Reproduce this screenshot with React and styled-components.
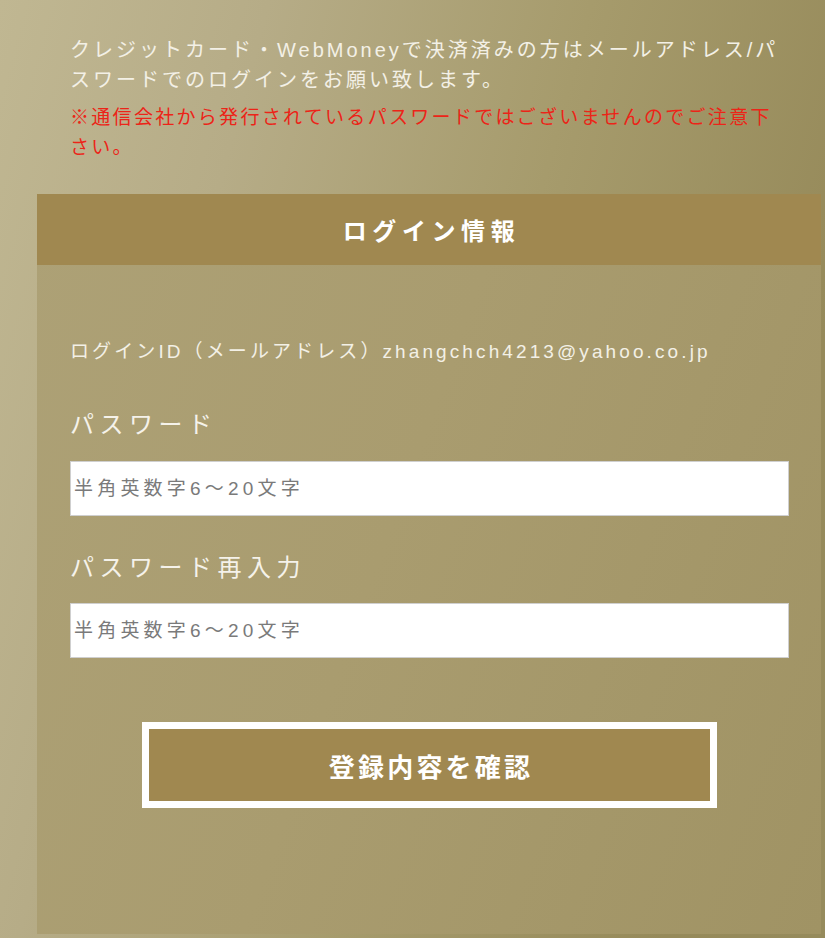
import React from 'react';
import styled, { createGlobalStyle } from 'styled-components';

const GlobalStyle = createGlobalStyle`
	html,
	body {
		margin: 0;
		padding: 0;
	}

	body {
		min-height: 100vh;
		font-family: 'Liberation Sans', 'Noto Sans CJK JP', sans-serif;
		background: linear-gradient(105deg, #c0b792 0%, #b6ac87 25%, #a69b6c 55%, #968a5a 85%, #968b5c 100%);
		background-attachment: fixed;
	}
`;

const Page = styled.div`
	padding: 35px 4px 4px 37px;
	box-sizing: border-box;
`;

const Intro = styled.div`
	width: 718px;
	margin-left: 33px;

	p {
		margin: 0;
		font-size: 20px;
		line-height: 30px;
		letter-spacing: 3px;
		color: #f3f0e6;
	}

	.notice {
		margin-top: 8px;
		font-size: 19px;
		letter-spacing: 2.3px;
		color: #ec2418;
	}
`;

const Panel = styled.section`
	margin-top: 31px;
	background: linear-gradient(110deg, #ada176 0%, #a99c6f 45%, #a09364 100%);
`;

const PanelTitle = styled.h2`
	margin: 0;
	height: 71px;
	display: flex;
	align-items: center;
	justify-content: center;
	background-color: #a08850;
	color: #fff;
	font-size: 24px;
	font-weight: bold;
	letter-spacing: 5.6px;
	padding-left: 5px;
`;

const PanelBody = styled.div`
	padding: 72px 32px 126px 33px;
	display: flex;
	flex-direction: column;
`;

const LoginId = styled.div`
	font-size: 19px;
	line-height: 30px;
	letter-spacing: 3.1px;
	color: #f3f0e6;
`;

const Label = styled.label`
	margin-top: ${(p) => p.$gap}px;
	font-size: 24px;
	line-height: 36px;
	letter-spacing: 5.5px;
	color: #f5f2ea;
`;

const Input = styled.input`
	margin-top: ${(p) => p.$gap}px;
	height: 55px;
	box-sizing: border-box;
	border: 1px solid #cfcfcf;
	background: #fff;
	padding: 0 0 0 3px;
	font-family: 'Liberation Sans', 'Noto Sans CJK JP', sans-serif;
	font-size: 19px;
	letter-spacing: 4.2px;
	color: #333;
	outline: none;

	&::placeholder {
		color: #7a7a7a;
	}
`;

const Submit = styled.button`
	align-self: center;
	margin-top: 64px;
	width: 575px;
	height: 86px;
	box-sizing: border-box;
	border: 7px solid #fff;
	background-color: #a08850;
	color: #fff;
	font-family: 'Liberation Sans', 'Noto Sans CJK JP', sans-serif;
	font-size: 26px;
	font-weight: bold;
	letter-spacing: 3.2px;
	padding: 0 0 0 3px;
	cursor: pointer;
`;

function App() {
	return (
		<>
			<GlobalStyle />
			<Page>
				<Intro>
					<p>クレジットカード・WebMoneyで決済済みの方はメールアドレス/パスワードでのログインをお願い致します。</p>
					<p className='notice'>※通信会社から発行されているパスワードではございませんのでご注意下さい。</p>
				</Intro>
				<Panel>
					<PanelTitle>ログイン情報</PanelTitle>
					<PanelBody>
						<LoginId>ログインID（メールアドレス）zhangchch4213@yahoo.co.jp</LoginId>
						<Label $gap={40} htmlFor='pw'>パスワード</Label>
						<Input $gap={18} id='pw' type='password' placeholder='半角英数字6〜20文字' />
						<Label $gap={34} htmlFor='pw2'>パスワード再入力</Label>
						<Input $gap={17} id='pw2' type='password' placeholder='半角英数字6〜20文字' />
						<Submit type='button'>登録内容を確認</Submit>
					</PanelBody>
				</Panel>
			</Page>
		</>
	);
}

export default App;
